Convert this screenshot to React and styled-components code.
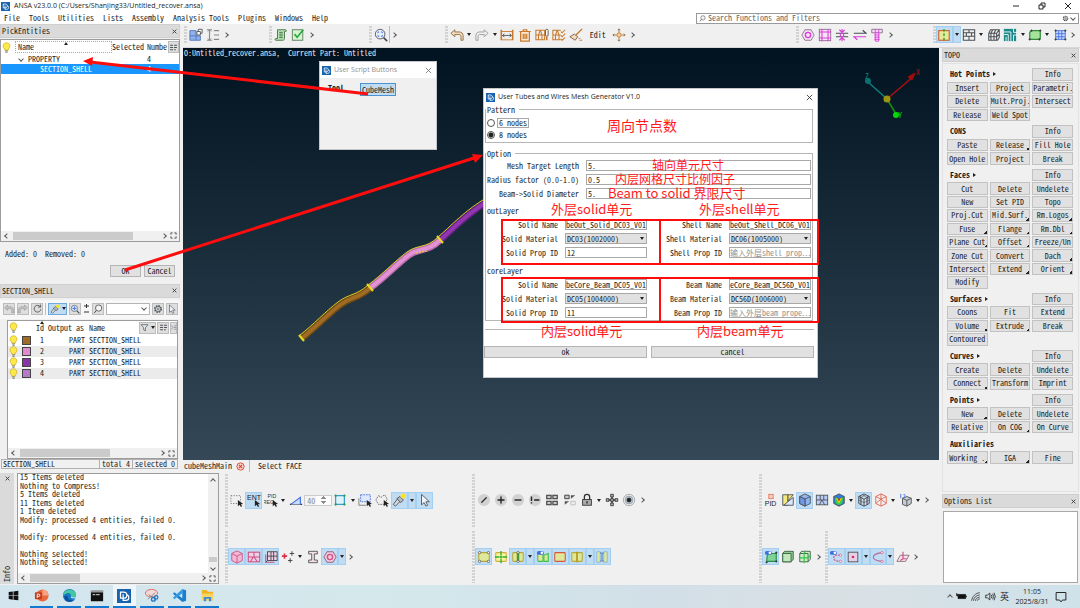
import React, { useState } from "react";
import styled, { createGlobalStyle, css } from "styled-components";

const MONO = `"Noto Sans Mono CJK SC", "Liberation Mono", "Noto Sans CJK SC", monospace`;
const SANS = `"Open Sans", "Noto Sans CJK SC", sans-serif`;

const GlobalStyle = createGlobalStyle`
  * { box-sizing: border-box; }
  body { margin: 0; background: #f0f0f0; }
  button, input, select { font: inherit; color: inherit; margin: 0; padding: 0; border-radius: 0; }
  table { border-collapse: collapse; }
`;

const Page = styled.div`
  position: relative;
  display: flex;
  flex-direction: column;
  height: 100vh;
  overflow: hidden;
  font-family: ${MONO};
  font-size: 8px;
  line-height: 10px;
  color: #1c1c1c;
  background: #f0f0f0;
  white-space: pre;
`;

/* ---------- icons, all drawn on a 16 x 16 grid ---------- */

const G = "#4a4f54";
const O = "#c87a2c";
const M = "#d83cd8";
const P = "#cf4f86";
const B = "#3f6fe0";

const Bulb = () => (
  <g>
    <path d="M8 1a5 5 0 0 1 3 9l-.6 2H5.600l-.6-2A5 5 0 0 1 8 1z" fill="#fde94a" stroke="#c9ad1c" />
    <path d="M6 13h4M6.500 15h3" stroke="#777" strokeWidth="1.400" />
  </g>
);
const Cursor = ({ x = 9, y = 8 }) => (
  <path transform={`translate(${x} ${y})`} d="M0 0l0 7 2-1.500 1.500 2.500 1.300-.8L3.500 4.800 6 4.500z" fill="#222" />
);
const Cube = ({ fill = "none", c = G }) => (
  <g stroke={c} strokeLinejoin="round">
    <path d="M8 1l6 3v8l-6 3-6-3V4z" fill={fill} />
    <path d="M2 4l6 3 6-3M8 7v8" fill="none" />
  </g>
);
const Disc = ({ children }) => (
  <g>
    <circle cx="8" cy="8" r="7" fill="#d2d2d2" />
    <g stroke="#222" strokeWidth="1.600">{children}</g>
  </g>
);
const Sheet = ({ x = 2, w = 12, c = "#b5a93a", f = "#dfe89a" }) => (
  <rect x={x} y="3" width={w} height="10" rx="1" fill={f} stroke={c} strokeWidth="1.200" />
);
const Dots = ({ list, c = G, f = "#fff", r = 1.3 }) =>
  list.map(([x, y], i) => <circle key={i} cx={x} cy={y} r={r} fill={f} stroke={c} strokeWidth=".8" />);
const Toggle = () => (
  <g>
    <rect x="1" y="1" width="8" height="4.500" rx="2.200" fill={B} />
    <circle cx="6.700" cy="3.200" r="1.500" fill="#fff" />
  </g>
);
const Flash = () => (
  <g>
    <path d="M1.500 13l5-6.500 3 2.800-5.500 5.700z" fill="#d5d9dc" stroke={G} />
    <path d="M5.500 6.500l3.500-2.500 4 4-3 3z" fill="#b6bbc0" stroke={G} />
    <circle cx="12.500" cy="3.500" r="2.800" fill="#f8e324" />
  </g>
);
const corners = [[3, 3], [13, 3], [3, 13], [13, 13]];

const ICONS = {
  bulb: <Bulb />,
  parts: <g><path d="M1 3h7v6h5v5H1z" fill="#8fb2ea" stroke="#4b74bd" /><path d="M9 4h4v4H9zM10.500 4V1.500H15V6h-2" fill="#fff" stroke={G} /><path d="M1 9h7v5" stroke="#4b74bd" fill="none" /></g>,
  spacing: <g stroke="#8a8a8a" fill="none"><path d="M1 2h6M4 2v12M1 14h6M9 3h6M9 8h6M9 13h6" strokeWidth="1.300" /><path d="M2 4l2-2 2 2M2 12l2 2 2-2" /></g>,
  script: <g stroke="#3d6b3f"><path d="M4 2h9c1 0 2 2 0 2h-1v8c0 2-2 2-2 2H2c-1 0-1-2 0-2h2z" fill="#b9e5b6" /><path d="M6 5h4M6 7h4M6 9h4M6 11h4" /></g>,
  check: <g fill="none"><rect x="1.500" y="2" width="12" height="12" fill="#d5f3d3" stroke="#587a5a" /><path d="M4 7l3 3.500L14 2" stroke="#27a837" strokeWidth="1.800" /></g>,
  zoomfit: <g fill="none"><circle cx="7" cy="7" r="5.500" fill="#e9f0fb" stroke={G} /><path d="M11 11l4 4" stroke={G} strokeWidth="2" /><path d="M4.500 6V4.500H6M8 4.500h1.500V6M9.500 8v1.500H8M6 9.500H4.500V8" stroke={B} /></g>,
  undo: <path d="M1 6l4.500-4v2.500h5c3 0 4.500 2 4.500 4V14h-2.500V9.500c0-1-.8-2-2-2h-5V10z" fill="#f4d9b8" stroke="#8b6b45" />,
  redo: <path d="M15 6l-4.500-4v2.500h-5C2.500 4.500 1 6.500 1 8.500V14h2.500V9.500c0-1 .8-2 2-2h5V10z" fill="#ededed" stroke="#9b9b9b" />,
  measure: <g stroke={O} fill="none"><path d="M1.500 2v12M14.500 2v12" strokeWidth="1.800" /><path d="M2 13.500h12M2 4h12" /><path d="M3 8.500h10M5 6.500l-2 2 2 2M11 6.500l2 2-2 2" stroke={G} /></g>,
  trash: <g stroke={O} fill="none" strokeWidth="1.400"><path d="M1.500 4h13M6 4V2h4v2M3 4v11h10V4" fill="#fbe6cf" /><path d="M6 6.500v6M8 6.500v6M10 6.500v6" /></g>,
  meshpin: <g stroke={O} fill="none"><path d="M1 2.500h10v11H1zM1 8h10M6 2.500L4 8M6 2.500L8 8M4 8v5.500M8 8v5.500" strokeWidth="1.200" /><rect x="12" y="1.500" width="3" height="8" rx="1.500" fill="#fff" stroke={G} /><path d="M13.500 10v4" strokeWidth="1.800" /></g>,
  meshcheck: <g stroke={O} fill="none" strokeWidth="1.200"><path d="M10 2.500H1v11h9M1 8h9M6 2.500L4 8M6 2.500L8 8M4 8v5.500M8 8v5.500" /><path d="M10 4l1.500 1.500L15 2M10 8.500L11.500 10 15 6.500M10 12.500l1.500 1.500L15 11" /></g>,
  broom: <g fill="none"><path d="M15 1L8 8" stroke={O} strokeWidth="1.600" /><path d="M6 7l4 3-3 4-6-4z" fill="#f0dcc4" stroke="#7b5a38" /><path d="M11 12h2M12 14h3" stroke={O} /></g>,
  move: <g stroke="#8b6b45" fill="none"><circle cx="8" cy="8" r="2.500" fill="#f8cf9a" stroke={O} /><path d="M8 1v4M8 11v4M1 8h4M11 8h4M6.500 2.500L8 1l1.500 1.500M6.500 13.500L8 15l1.500-1.500M2.500 6.500L1 8l1.500 1.500M13.500 6.500L15 8l-1.500 1.500" /></g>,
  hexm: <g stroke={M} fill="#f6e4f6"><path d="M4.500 2h7L15 8l-3.500 6h-7L1 8z" stroke="#8a6a8a" /><circle cx="8" cy="8" r="3" strokeWidth="1.500" /></g>,
  hash: <g stroke={M} fill="none"><rect x="1.500" y="1.500" width="13" height="13" fill="#f6e4f6" stroke="#8a6a8a" /><path d="M4.500 1v14M11.500 1v14M1 4.500h14M1 11.500h14" strokeWidth="1.200" /></g>,
  squeeze: <g stroke={M} fill="none" strokeWidth="1.300"><path d="M1 6h14M1 10h14" stroke={G} /><circle cx="8" cy="8" r="2" /><path d="M8 1v4M5 2l3 3 3-3M8 15v-4M5 14l3-3 3 3" /></g>,
  swap: <g fill="none" strokeWidth="1.400"><path d="M1 6h14l-4-3.500" stroke={G} /><path d="M15 10H1l4 3.500" stroke={M} /></g>,
  bolt: <g stroke={M} fill="#f6dff6"><path d="M2 1.500h12v4H2z" stroke="#8a6a8a" /><path d="M6 5.500h4V15H6zM5 8h6M5 10.500h6M5 13h6M6 1.500v4M10 1.500v4" /></g>,
  sheetsym: <g><rect x="2" y="3" width="12" height="11" fill="#e4ec9c" stroke="#d06a3a" strokeWidth="1.400" /><path d="M8 1v15" stroke="#2c9c2c" strokeWidth="1.500" strokeDasharray="3 2" /></g>,
  grid: <g stroke={G} fill="none" strokeWidth="1.200"><path d="M1.500 2h13v12h-13zM1.500 5.500h13M1.500 9.500h13M8 2v3.500M5 5.500v4M11 5.500v4M8 9.500V14" /></g>,
  grid3d: <g stroke={G} fill="none" strokeWidth="1.200"><path d="M4 2h10v9l-2 3H2V6zM2 6h9v8M11 6l3-4M2 10h9l3-3M6.500 2l-2 4v8M10 2L8 6v8" /></g>,
  maze: <g stroke="#fff" fill="none"><rect x="1" y="1" width="14" height="14" fill="#18898a" stroke="none" /><path d="M1 4.500h8M1 7.500h5v8M9 4.500v11M12 1v4h4M12 15V8h4M3.500 10v6" /></g>,
  facegreen: <g><path d="M4 3h10v9l-2 1H2V5z" fill="#a5e39c" stroke="#2c8c35" strokeWidth="1.400" /><Dots list={[[4, 3], [14, 3], [13, 13], [2, 13]]} f="#333" r={0.9} /></g>,
  meshblue: <g stroke={B} fill="#c9d9fb"><path d="M3 3h11v10H3z" /><path d="M6.500 3v10M10 3v10M3 6.500h11M3 10h11" /><Dots list={[[3, 3], [14, 3], [14, 13], [3, 13]]} f="#333" r={0.9} /></g>,

  refresh: <g fill="none" stroke="#444" strokeWidth="1.400"><path d="M13 5a6 6 0 1 0 1 4" /><path d="M13.500 1v4.500H9" /></g>,
  undog: <path d="M1 6l4.500-4v2.500h5c3 0 4.500 2 4.500 4V14h-2.500V9.500c0-1-.8-2-2-2h-5V10z" fill="#ccc" stroke="#8e8e8e" />,
  redog: <path d="M15 6l-4.500-4v2.500h-5C2.500 4.500 1 6.500 1 8.500V14h2.500V9.500c0-1 .8-2 2-2h5V10z" fill="#ccc" stroke="#8e8e8e" />,
  flash: <Flash />,
  zoomblue: <g fill="none"><circle cx="7" cy="7" r="5" fill="#dfe9fb" stroke={G} /><path d="M11 11l4 4" stroke={G} strokeWidth="2" /><path d="M7 4v6M4 7h6" stroke={B} strokeWidth="1.500" /></g>,
  find: <g fill="none" stroke={G}><circle cx="9" cy="6.500" r="5" fill="#f4f4f4" strokeWidth="1.300" /><path d="M5.500 10L2 14.500" strokeWidth="1.600" /></g>,
  gear: <g fill="none" stroke={G}><circle cx="8" cy="8" r="5" strokeWidth="2.500" strokeDasharray="2.600 1.300" /><circle cx="8" cy="8" r="4" fill="#e8e8e8" /><circle cx="8" cy="8" r="1.500" /></g>,
  pointer: <path d="M4 1.500v12l3-2.500 2 4 2-1-2-4h4z" fill="#eef4fa" stroke={G} />,
  funnel: <path d="M2 3h12L9.500 8.500V14L6.500 12V8.500z" fill="#e8f0f8" stroke={G} strokeWidth="1.300" />,
  columns: <g fill={G}><path d="M2 3h5v2H2zM2 7h5v2H2zM2 11h5v2H2zM9 3h5v2H9zM9 7h5v2H9zM9 11h3v2H9z" /></g>,
  more: <path d="M2 3l5 5-5 5M9 4h5M9 8h5M9 12h5" stroke={G} fill="none" />,

  boxsel: <g><rect x="1" y="3" width="11" height="9" fill="none" stroke="#777" strokeDasharray="1.500 1.500" /><Cursor /></g>,
  ent: <g><text x="8" y="7.500" fontSize="8" textAnchor="middle" fill="#222" fontFamily="Liberation Sans, sans-serif">ENT</text><Cursor x={9} y={8} /></g>,
  pidreg: <g><text x="9" y="6" fontSize="6" textAnchor="middle" fill="#333" fontFamily="Liberation Sans, sans-serif">PID</text><text x="5" y="12" fontSize="6" textAnchor="middle" fill="#333" fontFamily="Liberation Sans, sans-serif">REG</text><Cursor x={10} y={8} /></g>,
  angle: <g fill="none"><path d="M1 13h14" stroke="#333" strokeWidth="1.500" /><path d="M2 13L13 5v8" stroke={B} strokeWidth="1.300" fill="#c9d9fb" /></g>,
  crop: <g><rect x="3" y="3" width="10" height="10" fill="#dff3fa" stroke="#3b9bd0" strokeWidth="1.400" /><Dots list={corners} f="#2aa05a" c="#2aa05a" r={1} /></g>,
  rectsel: <g><path d="M1 6v8h8" fill="none" stroke="#777" /><rect x="3" y="2" width="11" height="8" fill="#dfe8fc" stroke={B} strokeDasharray="2 1" /><Cursor x={10} y={8} /></g>,
  polysel: <g><path d="M4 3l3 2 4-3 3 5-3 6H4L1 8z" fill="none" stroke="#666" strokeDasharray="2 1" /><Cursor x={10} y={8} /></g>,

  dslash: <Disc><path d="M5 11l6-6" /></Disc>,
  dplus: <Disc><path d="M4 8h8M8 4v8" /></Disc>,
  dminus: <Disc><path d="M4 8h8" /></Disc>,
  dbang: <Disc><path d="M4 4v5M4 10.500v1.500M7 8h6" /></Disc>,
  four: <g fill="#c8c8c8" stroke="#333" strokeWidth="1.200"><path d="M2 2.500h5v4H2zM9 2.500h5v4H9zM2 9.500h5v4H2zM9 9.500h5v4H9z" /></g>,
  fourhalf: <g fill="#c8c8c8" stroke="#333"><path d="M2 2.500h5v4H2z" /><path d="M9 6.500v-4h5zM2 13.500v-4h5z" fill="#555" stroke="none" /><path d="M9 9.500h5v4H9z" fill="#eee" stroke="#bbb" /></g>,
  lock: <g><path d="M5 8V4.500a3 3 0 0 1 6 0V8" fill="none" stroke="#333" strokeWidth="1.500" /><rect x="3" y="7.500" width="10" height="6.500" fill="#aaa" stroke="#333" /><path d="M8 9.500v2.500" stroke="#222" strokeWidth="1.500" /></g>,
  cross4: <g fill="#bbb" stroke="#333"><path d="M6.500 1.500h3v3h-3zM6.500 6.500h3v3h-3zM6.500 11.500h3v3h-3zM1.500 6.500h3v3h-3zM11.500 6.500h3v3h-3z" /><path d="M4.500 8h2M9.500 8h2M8 4.500v2M8 9.500v2" strokeWidth="1.600" /></g>,
  target: <g fill="none" stroke="#9aa3ac"><circle cx="8" cy="8" r="6.500" /><circle cx="8" cy="8" r="4.500" fill="#b9c2ca" /><circle cx="8" cy="8" r="2.200" fill="#222" stroke="#222" /></g>,

  pid: <g><rect x="5.500" y="1.500" width="5" height="5" fill="#fbc9bd" stroke="#e07860" /><text x="7.500" y="14.500" fontSize="8" textAnchor="middle" fill="#222" fontFamily="Liberation Sans, sans-serif">PID</text></g>,
  foldy: <g stroke={G}><path d="M2 2h6v12H2z" fill="#f5ea7e" /><path d="M8 2h6L8 9z" fill="#f5ea7e" /><path d="M3 14L14 5v9z" fill="#dbe7fb" /></g>,
  cubeb: <g><Cube fill="#8fb5f2" /><path d="M2 4l6 3v8l-6-3z" fill="#6f9be6" stroke={G} /></g>,
  gridb: <g stroke={G}><rect x="1.500" y="2.500" width="13" height="11" fill="#b9cdf7" /><path d="M1.500 8h13M6 2.500v5.500M8 8l-3 5.500M8 8l3 5.500M10 2.500v5.500" fill="none" /></g>,
  cubec: <g><Cube fill="#2f7de0" /><path d="M3 4.500L8 7l5-2.500L11.500 12 8 14l-3.500-2z" fill="#35d04a" /><path d="M4.500 5.500L8 7l3.500-1.500L8 12z" fill="#ffe000" /><path d="M6 6l2 1 2-1-2 4z" fill="#e02a1c" /></g>,
  cubem: <g><Cube c="#444" fill="#c9def3" /><path d="M4 3v10M6 2l7 4M12 3v10M2 8l6 3 6-3M5 5.500v8M11 5.500v8M10 2L3 6" stroke="#444" fill="none" strokeWidth=".6" /></g>,
  cuber: <g><Cube c="#e0604c" /><path d="M8 1v6M2 12l6-5 6 5" stroke="#e0604c" fill="none" /></g>,
  cubeq: <g><path d="M9 4l5 2v6l-5 3-5-2V6z" fill="#c8ccd0" stroke={G} /><path d="M4 6l5 2.500L14 6M9 8.500V15" fill="none" stroke={G} /><path d="M2 1v5M5 2c2-1 3 1 1 2v1.500" fill="none" stroke={B} /></g>,

  cubep: <g><Cube fill="#f2b8d4" c={P} /></g>,
  gridp: <g stroke={P} fill="none" strokeWidth="1.200"><rect x="1.500" y="2.500" width="13" height="11" fill="#ecd0e4" /><path d="M1.500 8h13M8 2.500v5.500M7 8l-3 5.500M8 8l4 5.500" /></g>,
  gridp2: <g fill="none"><path d="M2 5v9h10" stroke={P} strokeWidth="1.300" /><rect x="4" y="2" width="11" height="10" fill="#ecd0e4" stroke="#444" /><path d="M4 7h11M8 2v10M11 2v10M2 14l2-2" stroke="#444" /></g>,
  plusses: <g fill="none"><path d="M1 7h6M4 4v6" stroke="#d8304a" strokeWidth="1.800" /><path d="M10 4h5M12.500 1.500v5M8 12h5M10.500 9.500v5" stroke={G} strokeWidth="1.200" /></g>,
  ibeam: <path d="M3 1.500h10v3H9.500v7H13v3H3v-3h3.500v-7H3z" fill="#f4dfe6" stroke={G} />,
  hexp: <g stroke={P} fill="#f2c8dc"><path d="M4.500 2h7L15 8l-3.500 6h-7L1 8z" stroke="#8a5a74" /><circle cx="8" cy="8" r="3" strokeWidth="1.500" /></g>,

  ya: <g><Sheet /><Dots list={corners} /></g>,
  yb: <g><Sheet x={2} f="#fbf5a0" c="#cfae3c" /><path d="M8 1v5M8 10v5M1 8h5M10 8h5M8 6.500v3M6.500 8h3" stroke="#2cb42c" fill="none" strokeWidth="1.500" /></g>,
  yc: <g><Sheet x={2} w={5} /><Sheet x={9} w={5} /><path d="M8 3v10" stroke="#2c9c2c" strokeWidth="2" /><Dots list={[[8, 3], [8, 13]]} /></g>,
  yd: <g><Sheet x={2} w={6} c="#3fbf4f" /><path d="M9 6l5-2v9H9z" fill="#dfe89a" stroke="#3fbf4f" strokeWidth="1.300" /><Toggle /></g>,
  ye: <Sheet c="#d8543c" />,
  yf: <g><Sheet x={2} w={12} /><path d="M8 2v12" stroke="#b59c1c" strokeWidth="2" /></g>,
  yg: <g><path d="M2 2h4v12H2zM10 2h4v12h-4z" fill="#e0e89c" stroke="#8ab4d8" /><path d="M6 3l2 1 2-1M8 4v8M6 13l2-1 2 1" stroke="#5c8cc8" fill="none" strokeWidth="1.400" /></g>,

  ga: <g><path d="M4 4h10v9H3z" fill="#7fd494" stroke="#2c8c4c" strokeWidth="1.300" /><Dots list={[[14, 3], [14, 13], [3, 14]]} f="#222" r={0.9} /><Toggle /></g>,
  gb: <g stroke="#3c5c40"><path d="M4 1.500h10v9l-2.500 3H2V4z" fill="#8ecb92" /><path d="M2 4h9.500v9.500H2z" fill="#bfe8bc" /></g>,
  gc: <g stroke="#3c5c40" fill="#cfeccb"><path d="M4 1.500h10v9l-2.500 3H2V4zM2 4h9.500v9.500" /><path d="M1 9h10l4-3M7 15V4l2-3" stroke="#35c44a" fill="none" strokeWidth="1.300" /></g>,
  pa: <g fill="none"><path d="M13 6C3 4 3 13 12 13" stroke={P} strokeDasharray="2.500 1" strokeWidth="1.300" /><Dots list={[[13, 6], [13, 13]]} c={P} /><Toggle /></g>,
  pb: <g><rect x="2.500" y="2.500" width="11" height="11" fill="#e6cfe8" stroke={G} /><circle cx="8" cy="8" r="1.500" fill="#d8304a" /></g>,
  pc: <g fill="none"><path d="M12 3C-1 5 0 12 12 13" stroke="#b06a9a" strokeWidth="1.200" /><Dots list={[[12.500, 3], [12.500, 13]]} c={P} /></g>,
  pd: <g fill="none" stroke="#8a6a7a"><path d="M5 6h10l-4 7H1z" fill="#f6e2ec" /><path d="M8 2v8h4M8 10l-3 2" stroke={P} strokeWidth="1.300" /></g>,
  ansa: <g><rect width="16" height="16" fill="#1763ad" /><path d="M4 3.500h3.500c5 0 5 7 0 7H4zM7 6v7h3c5 0 4-6 1-6.500" fill="none" stroke="#fff" strokeWidth="1.400" /></g>,
};

const Svg = styled.svg`
  display: block;
  flex: none;
`;

const Icon = ({ n, s = 13 }) => (
  <Svg width={s} height={s} viewBox="0 0 16 16" aria-hidden="true">
    {ICONS[n]}
  </Svg>
);

/* ---------- tool strips ---------- */

const Strip = styled.div`
  display: flex;
  align-items: center;
  width: ${(p) => p.$w}px;
  flex: none;
`;

const ToolBtn = styled.button`
  flex: ${(p) => p.$grow || 35} 0 0;
  min-width: 0;
  height: 17px;
  display: flex;
  align-items: center;
  justify-content: center;
  border: 1px solid transparent;
  background: none;
  overflow: hidden;
  ${(p) =>
    p.$on &&
    css`
      background: #bfdcf3;
      border-color: #a3cff2;
    `}
`;

const Caret = styled.i`
  border: 2px solid transparent;
  border-top: 3px solid #222;
  border-bottom: 0;
`;

const Angle = styled.i`
  width: 4px;
  height: 4px;
  border: solid #5a5a5a;
  border-width: 1px 1px 0 0;
  transform: rotate(${(p) => p.$r || 45}deg);
`;

const Spin = styled.input`
  flex: 54 0 0;
  min-width: 0;
  width: 0;
  height: 11px;
  border: 1px solid #ccc;
  background: #f3f3f3;
  color: #8a8a8a;
  padding-left: 2px;
  &::-webkit-inner-spin-button {
    opacity: 1;
    width: 8px;
  }
`;

const Grip = styled.div`
  width: 3px;
  align-self: stretch;
  margin: 2px 0 2px 1px;
  background: repeating-linear-gradient(#d2d2d2 0 2px, transparent 2px 3px);
`;

const Divider = styled.div`
  width: 1px;
  align-self: stretch;
  background: #bbb;
`;

const Tools = ({ w, items }) => (
  <Strip $w={w}>
    {items.split(" ").map((raw, i) => {
      const on = raw[0] === "*";
      const n = on ? raw.slice(1) : raw;
      if (n === "v")
        return <ToolBtn key={i} $on={on} $grow={14} aria-label="menu"><Caret /></ToolBtn>;
      if (n === ">")
        return <ToolBtn key={i} $grow={14} aria-label="more"><Angle /></ToolBtn>;
      if (n === "|") return <Divider key={i} />;
      if (n === "Edit") return <ToolBtn key={i} $grow={54}>Edit</ToolBtn>;
      if (n === "spin") return <Spin key={i} type="number" aria-label="Angle" defaultValue="40" />;
      return <ToolBtn key={i} $on={on} aria-label={n}><Icon n={n} s={14} /></ToolBtn>;
    })}
  </Strip>
);

const ToolCell = styled.div`
  display: flex;
  align-items: center;
  min-width: 0;
  overflow: hidden;
`;

const Cell = ({ w, items }) => (
  <ToolCell>
    <Grip />
    <Tools w={w} items={items} />
  </ToolCell>
);

/* ---------- title bar and menu ---------- */

const TitleBar = styled.header`
  display: flex;
  align-items: center;
  gap: 4px;
  height: 12px;
  padding: 0 8px 0 1px;
  background: #fff;
  font-family: ${SANS};
  font-size: 7px;
`;

const WinButtons = styled.div`
  display: flex;
  margin-left: auto;
  gap: 18px;
`;

const PlainBtn = styled.button`
  display: flex;
  border: 0;
  background: none;
`;

const MenuBar = styled.nav`
  display: flex;
  align-items: center;
  height: 12px;
  padding: 0 1px 0 4px;
  background: #fff;
`;

const MenuItem = styled.button`
  border: 0;
  background: none;
  margin-right: 9px;
`;

const SearchBox = styled.label`
  display: flex;
  align-items: center;
  gap: 2px;
  width: 36%;
  max-width: 383px;
  height: 11px;
  margin-left: auto;
  padding: 0 3px 0 2px;
  border: 1px solid #9a9a9a;
  background: #fff;
  color: #666;
  input {
    flex: 1;
    border: 0;
    height: 9px;
    outline: 0;
  }
  input::placeholder {
    color: #666;
  }
`;

/* ---------- main grid ---------- */

const Main = styled.main`
  flex: 1;
  min-height: 0;
  display: grid;
  grid-template-columns: 183px 1fr 141px;
  grid-template-rows: 24px 1fr 113px;
  grid-template-areas: "left tools tools" "left center right" "bottom bottom right";
`;

const TopTools = styled.div`
  grid-area: tools;
  display: grid;
  grid-template-columns: 85fr 100fr 76fr 351fr 137fr 148fr;
  padding-bottom: 2px;
  border-bottom: 1px solid #d8d8d8;
`;

const LeftCol = styled.aside`
  grid-area: left;
  display: flex;
  flex-direction: column;
  padding-right: 3px;
  min-height: 0;
`;

const PanelHead = styled.div`
  display: flex;
  align-items: center;
  justify-content: space-between;
  height: 14px;
  flex: none;
  padding: 0 2px 0 1px;
  background: #dadada;
  border: 1px solid #cfcfcf;
`;

const Cross = ({ s = 5, c = "#333", w = 1.4 }) => (
  <Svg width={s} height={s} viewBox="0 0 8 8"><path d="M1 1l6 6M7 1L1 7" stroke={c} strokeWidth={w} /></Svg>
);

const Head = ({ children }) => (
  <PanelHead>
    {children}
    <PlainBtn aria-label="close"><Cross /></PlainBtn>
  </PanelHead>
);

const ListBox = styled.div`
  display: flex;
  flex-direction: column;
  flex: ${(p) => p.$grow} 1 0;
  margin: ${(p) => p.$m || "0"};
  border: 1px solid #9c9c9c;
  background: #fff;
  min-height: 0;
  overflow: hidden;
`;

const Table = styled.table`
  width: 100%;
  table-layout: fixed;
  th {
    position: relative;
    font-weight: normal;
    text-align: left;
    height: ${(p) => p.$head}px;
  }
  th, td {
    padding: 0;
    overflow: hidden;
  }
  td {
    height: ${(p) => p.$row}px;
  }
`;

const Row = styled.tr`
  background: ${(p) => (p.$sel ? "#1a97ff" : p.$alt ? "#ebebeb" : "#fff")};
  color: ${(p) => (p.$sel ? "#fff" : "inherit")};
  td:nth-child(3) { text-align: ${(p) => (p.$parts ? "right" : "left")}; padding-right: ${(p) => (p.$parts ? 4 : 0)}px; }
  td:nth-child(4) { text-align: ${(p) => (p.$parts ? "right" : "left")}; padding-right: ${(p) => (p.$parts ? 4 : 0)}px; }
`;

const NameHead = styled.span`
  display: block;
  position: relative;
  height: 12px;
  padding-left: 2px;
  border: 1px dotted #aaa;
`;

const SortMark = styled.i`
  position: absolute;
  left: 50%;
  top: 0;
  border: 2px solid transparent;
  border-bottom: 3px solid #222;
  border-top: 0;
`;

const HeadTools = styled.span`
  display: flex;
  align-items: center;
  justify-content: flex-end;
  gap: 1px;
`;

const HeadName = styled.span`
  flex: 1;
`;

const TinyBtn = styled.button`
  display: flex;
  align-items: center;
  justify-content: center;
  gap: 2px;
  width: ${(p) => p.$w || 12}px;
  height: 12px;
  flex: none;
  border: 1px solid ${(p) => (p.$on ? "#6fa9dc" : "#bcbcbc")};
  background: ${(p) => (p.$on ? "#bfdcf3" : "#dedede")};
`;

const Tree = styled.span`
  display: flex;
  align-items: center;
  gap: 5px;
  padding-left: ${(p) => p.$in}px;
`;

const ScrollX = styled.div`
  display: flex;
  align-items: center;
  gap: 4px;
  height: 10px;
  flex: none;
  margin-top: auto;
  padding: 0 2px 0 4px;
  background: #f0f0f0;
`;

const Track = styled.div`
  flex: 1;
  height: 8px;
  i {
    display: block;
    height: 8px;
    width: ${(p) => p.$pct}%;
    background: #cbcbcb;
  }
`;

const HScroll = ({ pct }) => (
  <ScrollX>
    <Angle $r={225} />
    <Track $pct={pct}><i /></Track>
    <Angle />
    <Svg width="7" height="7" viewBox="0 0 8 8"><path d="M1 3V1h2M5 1h2v2M7 5v2H5M3 7H1V5" fill="none" stroke="#444" /></Svg>
  </ScrollX>
);

const Counts = styled.p`
  margin: 7px 0 6px 5px;
`;

const Actions = styled.div`
  display: flex;
  justify-content: flex-end;
  gap: 3px;
  padding: 0 5px 7px 0;
`;

const Push = styled.button`
  height: 12px;
  width: ${(p) => p.$w || "auto"};
  border: 1px solid #b4b4b4;
  background: #e1e1e1;
  line-height: 10px;
  white-space: nowrap;
`;

const SectionTools = styled.div`
  display: flex;
  align-items: center;
  gap: 2px;
  margin-top: 2px;
  padding: 3px 2px 4px 3px;
  background: #f7f7f7;
`;

const Combo = styled.span`
  position: relative;
  flex: 1;
  min-width: 0;
  select {
    display: block;
    width: 100%;
    height: 12px;
    appearance: none;
    border: 1px solid #b4b4b4;
    background: #fff;
  }
  i {
    position: absolute;
    right: 4px;
    top: 3px;
  }
`;

const Swatch = styled.i`
  display: block;
  width: 9px;
  height: 9px;
  border: 1px solid #444;
  background: ${(p) => p.$c};
`;

const Foot = styled.div`
  display: flex;
  height: 10px;
  margin: 0 2px 3px 1px;
  border: 1px solid #b0b0b0;
  line-height: 8px;
  span { padding: 0 2px; border-left: 1px solid #b0b0b0; }
  span:first-child { flex: 1; border: 0; padding-left: 1px; }
`;

const PARTS = [
  [1, "#a06c24"],
  [2, "#e08ad0"],
  [3, "#8a34a8"],
  [4, "#b47ac8"],
];

const Left = () => (
  <LeftCol>
    <Head>PickEntities</Head>
    <ListBox $grow={203} $m="1px 0 0 0">
      <Table $head={14} $row={10}>
        <colgroup><col style={{ width: 14 }} /><col style={{ width: 97 }} /><col style={{ width: 35 }} /><col /></colgroup>
        <thead>
          <tr>
            <th><Icon n="bulb" s={11} /></th>
            <th><NameHead>Name<SortMark /></NameHead></th>
            <th>Selected</th>
            <th><HeadTools><HeadName>Numbe</HeadName><TinyBtn $w={11} aria-label="columns"><Icon n="columns" s={9} /></TinyBtn></HeadTools></th>
          </tr>
        </thead>
        <tbody>
          <Row><td /><td><Tree $in={4}><Angle $r={135} />PROPERTY</Tree></td><td /><td>4</td></Row>
          <Row $sel><td /><td><Tree $in={25}>SECTION_SHELL</Tree></td><td /><td>4</td></Row>
        </tbody>
      </Table>
      <HScroll pct={83} />
    </ListBox>
    <Counts>Added: 0  Removed: 0</Counts>
    <Actions>
      <Push $w="31px">OK</Push>
      <Push $w="31px">Cancel</Push>
    </Actions>
    <Head>SECTION_SHELL</Head>
    <SectionTools>
      <TinyBtn aria-label="undo"><Icon n="undog" s={10} /></TinyBtn>
      <TinyBtn aria-label="redo"><Icon n="redog" s={10} /></TinyBtn>
      <TinyBtn aria-label="refresh"><Icon n="refresh" s={9} /></TinyBtn>
      <Divider />
      <TinyBtn $w={19} $on aria-label="highlight"><Icon n="flash" s={10} /><Caret /></TinyBtn>
      <TinyBtn aria-label="zoom"><Icon n="zoomblue" s={10} /></TinyBtn>
      <Svg width="7" height="12" viewBox="0 0 7 12"><path d="M1 3h5M3.500 1v4M1 9h5" stroke="#333" /></Svg>
      <TinyBtn aria-label="find"><Icon n="find" s={10} /></TinyBtn>
      <Combo><select aria-label="filter"><option /></select><Angle $r={135} /></Combo>
      <TinyBtn aria-label="settings"><Icon n="gear" s={10} /></TinyBtn>
      <TinyBtn aria-label="pick"><Icon n="pointer" s={10} /></TinyBtn>
    </SectionTools>
    <ListBox $grow={139} $m="1px 2px 0 7px">
      <Table $head={14} $row={11}>
        <colgroup><col style={{ width: 14 }} /><col style={{ width: 10 }} /><col style={{ width: 16 }} /><col style={{ width: 41 }} /><col /></colgroup>
        <thead>
          <tr>
            <th><Icon n="bulb" s={11} /></th>
            <th />
            <th> Id<SortMark /></th>
            <th>Output as</th>
            <th>
              <HeadTools>
                <HeadName>Name</HeadName>
                <TinyBtn $w={17} aria-label="filter"><Icon n="funnel" s={9} /><Caret /></TinyBtn>
                <TinyBtn $w={12} aria-label="columns"><Icon n="columns" s={9} /></TinyBtn>
                <TinyBtn $w={7} aria-label="more"><Icon n="more" s={7} /></TinyBtn>
              </HeadTools>
            </th>
          </tr>
        </thead>
        <tbody>
          {PARTS.map(([id, c], i) => (
            <Row key={id} $parts $alt={i % 2 === 1}>
              <td><Icon n="bulb" s={11} /></td>
              <td><Swatch $c={c} /></td>
              <td>{id}</td>
              <td>PART</td>
              <td>SECTION_SHELL</td>
            </Row>
          ))}
        </tbody>
      </Table>
      <HScroll pct={66} />
    </ListBox>
    <Foot><span>SECTION_SHELL</span><span>total 4</span><span>selected 0</span></Foot>
  </LeftCol>
);

/* ---------- viewport ---------- */

const Center = styled.section`
  grid-area: center;
  display: flex;
  flex-direction: column;
  min-width: 0;
`;

const Viewport = styled.div`
  position: relative;
  flex: 1;
  padding: 0 1px;
  overflow: hidden;
  color: #e8e8e8;
  background: linear-gradient(#011320, #344857);
`;

const Scene = styled.svg`
  position: absolute;
  inset: 0;
  width: 100%;
  height: 100%;
`;

const ViewStatus = styled.div`
  display: flex;
  align-items: center;
  gap: 4px;
  height: 12px;
  padding-left: 1px;
`;

const ROD = "M302 338C315 328 328 314 340 305S358 299 370 288";
const PINK = "M370 288C385 277 398 263 409 255S428 252 440 240";
const PURPLE = "M440 240C452 230 468 212 490 200";

const Tube = ({ d, c, dark }) => (
  <g fill="none">
    <path d={d} stroke={dark} strokeWidth="7" />
    <path d={d} stroke={c} strokeWidth="4" />
    <path d={d} stroke="#d9cc20" strokeWidth="1" transform="translate(-2 -3)" />
  </g>
);

const Model = () => (
  <Scene>
    <g transform="translate(-183 -48)">
      <Tube d={PURPLE} c="#8f36b0" dark="#66207f" />
      <Tube d={PINK} c="#e392d4" dark="#b96cab" />
      <Tube d={ROD} c="#a06c24" dark="#6e4915" />
      <path d="M299 335l5 6M367 284l6 7M437 236l6 7" stroke="#e8dc20" strokeWidth="2" />
      <path d="M416 253l11-2" stroke="#e8dc20" strokeDasharray="2 1" />
      <g strokeWidth="1.500">
        <path d="M887 99L868 82" stroke="#0c8080" />
        <path d="M887 99L914 76" stroke="#b01010" />
        <path d="M887 99L896 114" stroke="#109010" />
      </g>
      <circle cx="868" cy="81" r="3" fill="#0c7070" />
      <path d="M908 77l7-4-3 7z" fill="#a00c0c" stroke="#a00c0c" />
      <ellipse cx="896" cy="115" rx="3" ry="3" fill="#08d808" />
      <circle cx="887" cy="99" r="3.500" fill="#9c9410" />
      <text x="865" y="79" fontSize="8" fill="#0c8080">Z</text>
      <text x="916" y="75" fontSize="8" fill="#b01010">X</text>
      <text x="898" y="118" fontSize="8" fill="#08d808">Y</text>
    </g>
  </Scene>
);

const Window = styled.div`
  position: absolute;
  left: ${(p) => p.$x}px;
  top: ${(p) => p.$y}px;
  width: ${(p) => p.$w}px;
  color: #1c1c1c;
  background: ${(p) => p.$bg};
  border: 1px solid #c4c8cc;
`;

const WindowTitle = styled.div`
  display: flex;
  align-items: center;
  gap: 3px;
  height: 16px;
  padding: 0 4px 0 2px;
  background: #fff;
  color: ${(p) => (p.$dim ? "#909090" : "#1c1c1c")};
  font-family: ${SANS};
  font-size: 7px;
  button { margin-left: auto; }
`;

const ScriptBody = styled.div`
  display: flex;
  align-items: flex-start;
  gap: 16px;
  height: 71px;
  padding: 5px 8px;
`;

const ScriptBtn = styled.button`
  height: 13px;
  width: 36px;
  border: 1px solid #4b93d0;
  background: #bfdcf3;
  line-height: 10px;
`;

const Frame = styled.fieldset`
  min-width: 0;
  margin: ${(p) => p.$mt || 0}px 4px 0 1px;
  padding: ${(p) => p.$pt || 2}px 1px ${(p) => p.$pb || 2}px 0;
  border: 1px solid #b6b6b6;
  legend {
    height: 9px;
    line-height: 10px;
    margin-left: 0;
    padding: 0 4px 0 1px;
  }
`;

const RadioRow = styled.label`
  display: flex;
  align-items: center;
  gap: 2px;
  height: 12px;
  padding-left: 1px;
  input {
    width: 8px;
    height: 8px;
    appearance: none;
    border: 1px solid #555;
    border-radius: 50%;
    background: #fff;
  }
  input:checked {
    background: radial-gradient(#222 0 2px, #fff 3px);
  }
  span {
    padding: 0 1px;
    line-height: 8px;
    border: 1px solid ${(p) => (p.$focus ? "#a8a8a8" : "transparent")};
  }
`;

const Fields = styled.div`
  display: grid;
  grid-template-columns: ${(p) => p.$cols};
  grid-auto-rows: 11px;
  gap: 3px 7px;
  line-height: 11px;
  label { text-align: right; }
`;

const TextIn = styled.input`
  min-width: 0;
  width: 100%;
  height: 11px;
  border: 1px solid #a8a8a8;
  background: #fff;
  padding-left: ${(p) => (p.$tight ? 0 : 1)}px;
  &::placeholder { color: #909090; }
`;

const Pick = styled.span`
  position: relative;
  display: block;
  min-width: 0;
  select {
    display: block;
    width: 100%;
    height: 11px;
    appearance: none;
    border: 1px solid #a8a8a8;
    background: #e1e1e1;
    padding-left: 1px;
    line-height: 9px;
  }
  i {
    position: absolute;
    right: 3px;
    top: 4px;
  }
`;

const LayerName = styled.div`
  height: 8px;
  line-height: 8px;
  margin: ${(p) => p.$mt}px 0 4px 1px;
`;

const Rule = styled.hr`
  border: 0;
  border-top: 1px solid #b6b6b6;
  margin: 8px 3px 16px 1px;
`;

const Confirm = styled.div`
  display: grid;
  grid-template-columns: 1fr 1fr;
  gap: 4px;
  padding: 0 3px 19px 0;
`;

const Note = styled.span`
  position: absolute;
  left: ${(p) => p.$x}px;
  top: ${(p) => p.$y}px;
  line-height: 14px;
  font-family: "Noto Sans CJK SC", sans-serif;
  font-size: ${(p) => p.$s || 13}px;
  color: #ff1a1a;
  pointer-events: none;
`;

const RedBox = styled.div`
  position: absolute;
  left: ${(p) => p.$x}px;
  top: ${(p) => p.$y}px;
  width: 160px;
  height: 46px;
  border: 2px solid #ff0d0d;
  pointer-events: none;
`;

const Field = ({ id, label, value, hint, option, tight }) => (
  <>
    <label htmlFor={id}>{label}</label>
    {option ? (
      <Pick><select id={id}><option>{option}</option></select><Caret /></Pick>
    ) : (
      <TextIn id={id} defaultValue={value} placeholder={hint} $tight={tight} />
    )}
  </>
);

const LAYER_COLS = "72px 1fr 68px 1fr";

const MeshDialog = () => {
  const [nodes, setNodes] = useState("8");
  return (
    <Window $x={300} $y={40} $w={335} $bg="#fff">
      <WindowTitle>
        <Icon n="ansa" s={9} />
        User Tubes and Wires Mesh Generator V1.0
        <PlainBtn aria-label="close"><Cross s={7} w={1} /></PlainBtn>
      </WindowTitle>
      <Frame $pt={3} $pb={1}>
        <legend>Pattern</legend>
        {["6", "8"].map((n) => (
          <RadioRow key={n} $focus={n === "6"}>
            <input type="radio" name="nodes" checked={nodes === n} onChange={() => setNodes(n)} />
            <span>{n} nodes</span>
          </RadioRow>
        ))}
      </Frame>
      <Frame $mt={6}>
        <legend>Option</legend>
        <Fields $cols="93px 1fr">
          <Field id="len" label="Mesh Target Length" value="5." />
          <Field id="rad" label="Radius factor (0.0-1.0)" value="0.5" />
          <Field id="dia" label="Beam->Solid Diameter" value="5." />
        </Fields>
        <LayerName $mt={8}>outLayer</LayerName>
        <Fields $cols={LAYER_COLS}>
          <Field id="on" label="Solid Name" value="beOut_Solid_DC03_V01" tight />
          <Field id="sn" label="Shell Name" value="beOut_Shell_DC06_V01" tight />
          <Field id="om" label="Solid Material" option="DC03(1002000)" />
          <Field id="sm" label="Shell Material" option="DC06(1005000)" />
          <Field id="op" label="Solid Prop ID" value="12" />
          <Field id="sp" label="Shell Prop ID" hint="输入外层shell prop⋯" tight />
        </Fields>
        <LayerName $mt={9}>coreLayer</LayerName>
        <Fields $cols={LAYER_COLS}>
          <Field id="cn" label="Solid Name" value="beCore_Beam_DC05_V01" tight />
          <Field id="bn" label="Beam Name" value="eCore_Beam_DC56D_V01" tight />
          <Field id="cm" label="Solid Material" option="DC05(1004000)" />
          <Field id="bm" label="Beam Material" option="DC56D(1006000)" />
          <Field id="cp" label="Solid Prop ID" value="11" />
          <Field id="bp" label="Beam Prop ID" hint="输入外层beam prope⋯" tight />
        </Fields>
      </Frame>
      <Rule />
      <Confirm>
        <Push>ok</Push>
        <Push>cancel</Push>
      </Confirm>
      <RedBox $x={17} $y={130} />
      <RedBox $x={175} $y={130} />
      <RedBox $x={17} $y={188} />
      <RedBox $x={175} $y={188} />
      <Note $x={123} $y={29} $s={14}>周向节点数</Note>
      <Note $x={168} $y={69} $s={12}>轴向单元尺寸</Note>
      <Note $x={131} $y={83} $s={12}>内层网格尺寸比例因子</Note>
      <Note $x={124} $y={97}>Beam to solid 界限尺寸</Note>
      <Note $x={67} $y={113}>外层solid单元</Note>
      <Note $x={215} $y={113}>外层shell单元</Note>
      <Note $x={57} $y={235}>内层solid单元</Note>
      <Note $x={213} $y={235}>内层beam单元</Note>
    </Window>
  );
};

/* ---------- right column ---------- */

const RightCol = styled.aside`
  grid-area: right;
  display: flex;
  flex-direction: column;
  padding: 0 1px 2px 3px;
  min-height: 0;
`;

const Topo = styled.div`
  flex: 1;
  display: flex;
  flex-direction: column;
  gap: 3px;
  min-height: 0;
  margin: 1px 0 2px;
  padding: 4px 5px 26px 4px;
  border: 1px solid #e2e2e2;
`;

const Group = styled.div`
  flex: ${(p) => p.$rows} 0 0;
  display: grid;
  grid-template-columns: repeat(3, 1fr);
  grid-template-rows: repeat(${(p) => p.$rows}, 1fr);
  gap: 1px 2px;
  padding-bottom: 1px;
`;

const GroupTitle = styled.b`
  grid-column: span ${(p) => p.$span};
  display: flex;
  align-items: center;
  gap: 3px;
  padding-left: 3px;
  i {
    border: 2px solid transparent;
    border-left: 3px solid #222;
    border-right: 0;
  }
`;

const TopoBtn = styled.button`
  min-width: 0;
  min-height: 0;
  border: 1px solid #c2c2c2;
  overflow: hidden;
  line-height: 8px;
  white-space: nowrap;
  background: ${(p) =>
    p.$sub ? "linear-gradient(135deg, transparent 50%, #222 50%) right bottom / 3px 3px no-repeat #e1e1e1" : "#e1e1e1"};
`;

// a trailing "+" marks a button with a sub menu
const GROUPS = [
  ["Hot Points", true, "Info,Insert,Project,Parametri.,Delete,Mult.Proj.,Intersect,Release,Weld Spot"],
  ["CONS", false, "Info,Paste,Release+,Fill Hole,Open Hole,Project,Break"],
  ["Faces", true, "Info,Cut,Delete,Undelete,New,Set PID,Topo,Proj.Cut,Mid.Surf.+,Rm.Logos+,Fuse+,Flange+,Rm.Dbl+,Plane Cut+,Offset+,Freeze/Un,Zone Cut,Convert,Dach+,Intersect,Extend+,Orient+,Modify"],
  ["Surfaces", true, "Info,Coons,Fit,Extend,Volume+,Extrude+,Break,Contoured"],
  ["Curves", true, "Info,Create,Delete,Undelete,Connect+,Transform,Imprint"],
  ["Points", true, "Info,New+,Delete,Undelete,Relative,On COG+,On Curve"],
  ["Auxiliaries", false, "Working .+,IGA+,Fine"],
];

const Options = styled.div`
  height: 72px;
  margin: 3px 1px 0;
  border: 1px solid #a8a8a8;
  background: #fff;
`;

const Right = () => (
  <RightCol>
    <Head>TOPO</Head>
    <Topo>
      {GROUPS.map(([name, arrow, list]) => {
        const items = list.split(",");
        const info = items[0] === "Info";
        return (
          <Group key={name} $rows={Math.ceil((items.length + (info ? 2 : 3)) / 3)}>
            <GroupTitle $span={info ? 2 : 3}>{name}{arrow && <i />}</GroupTitle>
            {items.map((t) => (
              <TopoBtn key={t} $sub={t.endsWith("+")}>{t.replace("+", "")}</TopoBtn>
            ))}
          </Group>
        );
      })}
    </Topo>
    <Head>Options List</Head>
    <Options />
  </RightCol>
);

/* ---------- bottom ---------- */

const Bottom = styled.div`
  grid-area: bottom;
  display: grid;
  grid-template-columns: 224px 247fr 287fr 181fr;
  grid-template-rows: 1fr 1fr;
`;

const InfoPanel = styled.section`
  grid-row: 1 / 3;
  display: flex;
  gap: 3px;
  padding: 1px 5px 1px 0;
  min-height: 0;
`;

const InfoTab = styled.div`
  display: flex;
  flex-direction: column;
  justify-content: space-between;
  align-items: center;
  width: 14px;
  padding: 3px 0 2px;
  background: #dadada;
  span { writing-mode: sideways-lr; }
`;

const Log = styled.div`
  flex: 1;
  display: flex;
  flex-direction: column;
  min-width: 0;
  border: 1px solid #9c9c9c;
  background: #fff;
`;

const LogBody = styled.div`
  flex: 1;
  display: flex;
  min-height: 0;
  overflow: hidden;
`;

const LogLines = styled.div`
  flex: 1;
  display: flex;
  flex-direction: column;
  justify-content: space-between;
  padding: 0 0 9px 2px;
  p { margin: 0; height: 5px; line-height: 5px; }
`;

const ScrollY = styled.div`
  display: flex;
  flex-direction: column;
  align-items: center;
  justify-content: space-between;
  width: 10px;
  padding: 5px 0 3px;
  background: #f0f0f0;
  b { width: 8px; height: 5px; margin: auto 0 4px; background: #cbcbcb; }
`;

const LOG = [
  "15 Items deleted", "Nothing to Compress!", "5 Items deleted", "11 Items deleted", "1 Item deleted",
  "Modify: processed 4 entities, failed 0.", "", "Modify: processed 4 entities, failed 0.", "",
  "Nothing selected!", "Nothing selected!",
];

const Split = styled.div`
  display: grid;
  grid-template-columns: 66fr 115fr;
`;

/* ---------- task bar ---------- */

const TaskBar = styled.footer`
  display: flex;
  align-items: stretch;
  height: 23px;
  background: linear-gradient(90deg, #d3e5ee, #d4e9ec 35%, #d2dfe8 60%, #d9e0e4 78%, #cfe2ea);
`;

const TaskList = styled.div`
  display: flex;
  width: 221px;
`;

const Task = styled.button`
  flex: 1;
  display: flex;
  align-items: center;
  justify-content: center;
  margin: 0 2px;
  border: 0;
  border-bottom: 2px solid ${(p) => (p.$run ? "#1478cf" : "transparent")};
  background: ${(p) => (p.$on ? "#eef6fa" : "none")};
`;

const Tray = styled.div`
  display: flex;
  align-items: center;
  gap: 4px;
  margin-left: auto;
  padding-right: 13px;
  font-family: ${SANS};
`;

const Lang = styled.span`
  font-family: "Noto Sans CJK SC", sans-serif;
  font-size: 9px;
`;

const Clock = styled.time`
  width: 38px;
  text-align: center;
  font-size: 7px;
`;

const T = ({ s = 15, children }) => <Svg width={s} height={s} viewBox="0 0 16 16">{children}</Svg>;

const Tasks = () => (
  <TaskBar>
    <TaskList>
      <Task aria-label="Start"><T s={11}><path d="M1 3l6-1v5.500H1zM8 2l7-1v6.500H8zM1 8.500h6V14l-6-1zM8 8.500h7V15l-7-1z" fill="#111" /></T></Task>
      <Task $run aria-label="PowerPoint"><T><circle cx="9" cy="8" r="6.500" fill="#e8693f" /><path d="M9 1.500a6.500 6.500 0 0 1 6.500 6.500H9z" fill="#f8a183" /><rect x="1" y="4.500" width="7.500" height="7.500" rx="1" fill="#c43e1c" /><path d="M3.500 10.500v-4h1.500a1.200 1.200 0 0 1 0 2.500H3.500" fill="none" stroke="#fff" /></T></Task>
      <Task $run aria-label="Edge"><T><circle cx="8" cy="8" r="7" fill="#1878c8" /><path d="M1.500 7C2 0 14 0 15 7c.2 3-4 3.500-5.500 2.500C10.500 7 8 5 5.500 5.500 3.500 6 2 7 1.500 9z" fill="#45c8a0" /><path d="M6 8c-1 3 2 6 6 5-5 4-10 0-9.500-4.500z" fill="#0d4f98" /><path d="M9.500 9.500c1 1.500 4 1.500 5.500 0" stroke="#fff" fill="none" /></T></Task>
      <Task $run aria-label="Terminal"><T s={14}><rect x="1" y="2" width="14" height="12" fill="#111" /><path d="M1 2h14v2H1z" fill="#999" /><path d="M3 6.500h3M7 6.500h4" stroke="#fff" /></T></Task>
      <Task $run $on aria-label="ANSA"><Icon n="ansa" s={14} /></Task>
      <Task $run aria-label="Snip"><T><ellipse cx="8" cy="5.500" rx="6.500" ry="4" fill="#f4d8d8" stroke="#d86a6a" /><path d="M4 12l8-7M5 7l8 6" stroke="#8a8a8a" /><circle cx="10" cy="12" r="2" fill="none" stroke="#2478c8" strokeWidth="1.500" /><circle cx="13" cy="10" r="1.800" fill="none" stroke="#2478c8" strokeWidth="1.300" /></T></Task>
      <Task $run aria-label="Code"><T><path d="M11 1l4 1.500v11L11 15 1 6l1.500-1.500L11 11z" fill="#1a7fd0" /><path d="M11 1v4.500L2.500 12 1 10.500z" fill="#2f9ae8" /></T></Task>
      <Task $run aria-label="Files"><T><path d="M2 2h5l1.500 2H14v9H2z" fill="#f0b323" /><path d="M2 6h12v7H2z" fill="#fcd462" /><path d="M4 14V9.500h8V14h-2.500v-2.500h-3V14z" fill="#3a8ed8" /></T></Task>
    </TaskList>
    <Tray>
      <Angle $r={-45} />
      <T s={11}><path d="M3 5h11v6H3zM1 3v4h3" fill="#111" stroke="#111" /><path d="M14 7h1.500v2H14z" /></T>
      <T s={10}><path d="M1 14C2 7 7 2 14 1M4 14c.5-5 4-8.500 10-9.500M7 14c.5-3 3-5.500 7-6M10 14c.5-2 2-3 4-3" fill="none" stroke="#333" strokeWidth="1.300" /></T>
      <T s={11}><path d="M1 6h2.500L7 3v10L3.500 10H1zM9 5.500q2 2.500 0 5M11 4q3 4 0 8M13 2.500q4 5.500 0 11" fill="none" stroke="#222" strokeWidth="1.200" /></T>
      <Lang>英</Lang>
      <Clock>11:05{"\n"}2025/8/31</Clock>
      <T s={12}><path d="M1.500 2h13v10H10l-2 2.500L6 12H1.500z" fill="none" stroke="#222" strokeWidth="1.300" /></T>
    </Tray>
  </TaskBar>
);

const Overlay = styled.svg`
  position: absolute;
  inset: 0;
  width: 100%;
  height: 100%;
  pointer-events: none;
`;

const MENUS = ["File", "Tools", "Utilities", "Lists", "Assembly", "Analysis Tools", "Plugins", "Windows", "Help"];

const App = () => (
  <Page>
    <GlobalStyle />
    <TitleBar>
      <Icon n="ansa" s={9} />
      ANSA v23.0.0 (C:/Users/Shanjing33/Untitled_recover.ansa)
      <WinButtons>
        <PlainBtn aria-label="minimize"><Svg width="8" height="8" viewBox="0 0 8 8"><path d="M1 4h6" stroke="#222" /></Svg></PlainBtn>
        <PlainBtn aria-label="restore"><Svg width="8" height="8" viewBox="0 0 8 8"><path d="M1 3h4v4H1zM3 3V1h4v4H5" fill="none" stroke="#222" /></Svg></PlainBtn>
        <PlainBtn aria-label="close"><Cross s={8} c="#222" w={1} /></PlainBtn>
      </WinButtons>
    </TitleBar>
    <MenuBar>
      {MENUS.map((m) => <MenuItem key={m}>{m}</MenuItem>)}
      <SearchBox>
        <Icon n="find" s={7} />
        <input placeholder="Search Functions and Filters" aria-label="Search" />
        <Icon n="gear" s={7} />
        <Angle $r={135} />
      </SearchBox>
    </MenuBar>
    <Main>
      <Left />
      <TopTools>
        <Cell w={43} items="parts spacing >" />
        <Cell w={43} items="script check >" />
        <Cell w={26} items="zoomfit | >" />
        <Cell w={188} items="undo v redo v measure trash meshpin meshcheck broom Edit move >" />
        <Cell w={95} items="hexm hash squeeze swap bolt >" />
        <Cell w={140} items="*sheetsym *v grid v grid3d maze v facegreen v meshblue >" />
      </TopTools>
      <Center>
        <Viewport>
          O:Untitled_recover.ansa,  Current Part: Untitled
          <Model />
          <Window $x={136} $y={13} $w={118} $bg="#f0f0f0">
            <WindowTitle $dim>
              <Icon n="ansa" s={9} />
              User Script Buttons
              <PlainBtn aria-label="close"><Cross s={7} w={1} c="#777" /></PlainBtn>
            </WindowTitle>
            <ScriptBody>
              <b>Tool</b>
              <ScriptBtn>CubeMesh</ScriptBtn>
            </ScriptBody>
          </Window>
          <MeshDialog />
        </Viewport>
        <ViewStatus>
          cubeMeshMain
          <Svg width="9" height="9" viewBox="0 0 16 16"><circle cx="8" cy="8" r="6.500" fill="#fbd5d0" stroke="#d8402c" strokeWidth="1.500" /><path d="M5 5l6 6M11 5l-6 6" stroke="#d8402c" strokeWidth="1.800" /></Svg>
          <Divider />
          {" Select FACE"}
        </ViewStatus>
      </Center>
      <Right />
      <Bottom>
        <InfoPanel>
          <InfoTab><Cross /><span>Info</span></InfoTab>
          <Log>
            <LogBody>
              <LogLines>{LOG.map((l, i) => <p key={i}>{l}</p>)}</LogLines>
              <ScrollY><Angle $r={-45} /><b /><Angle $r={135} /></ScrollY>
            </LogBody>
            <HScroll pct={30} />
          </Log>
        </InfoPanel>
        <Cell w={205} items="boxsel *ent pidreg v angle spin crop v rectsel polysel *flash *v *pointer" />
        <Cell w={171} items="dslash dplus dminus dbang four fourhalf lock v cross4 target >" />
        <Cell w={168} items="pid foldy *cubeb gridb cubec v *cubem cuber v cubeq v >" />
        <Cell w={126} items="*cubep *gridp *gridp2 plusses v ibeam *hexp *v >" />
        <Cell w={136} items="*ya yb *yc *v *yd *ye *yf *v *yg" />
        <Split>
          <Cell w={60} items="*ga gb gc >" />
          <Cell w={91} items="*pa *pb *v *pc *v pd >" />
        </Split>
      </Bottom>
    </Main>
    <Tasks />
    <Overlay>
      <g stroke="#ff0d0d" strokeWidth="3" fill="#ff0d0d">
        <path d="M368 94L90 62M125 270L474 158" />
        <path d="M83 61l10-4-1 9zM483 155l-11-1 3 9z" strokeWidth="0" />
      </g>
    </Overlay>
  </Page>
);

export default App;
